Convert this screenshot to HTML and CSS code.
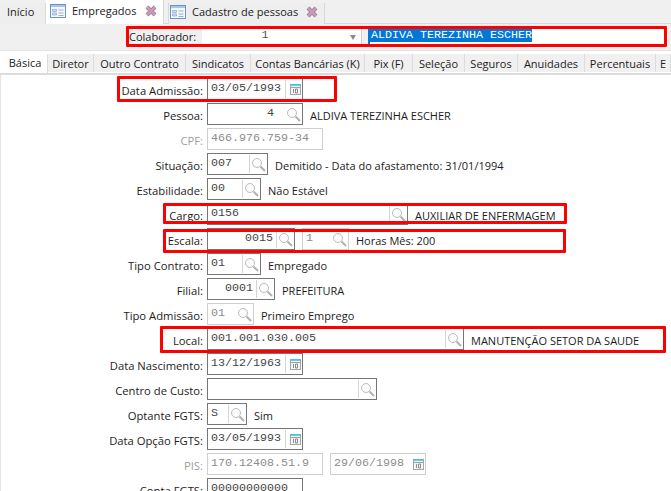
FILE: index.html
```html
<!DOCTYPE html>
<html lang="pt-BR">
<head>
<meta charset="utf-8">
<title>Empregados</title>
<link rel="stylesheet" href="styles.css">
</head>
<body>
<svg class="defs" aria-hidden="true">
  <symbol id="lupa" viewBox="0 0 15 15">
    <circle cx="6" cy="6" r="4.5" fill="#fbfbfb" stroke="#bdbdbd" stroke-width="1"/>
    <path d="M9.5 9.5l4.5 4.5" stroke="#b2b2b2" stroke-width="2" fill="none"/>
  </symbol>
  <symbol id="cal" viewBox="0 0 11 11">
    <rect x="0.5" y="0.5" width="10" height="10" fill="#f6f6f6" stroke="#a6a6a6"/>
    <path d="M0 1h11" stroke="#3cc8dc" stroke-width="1.6"/>
    <path d="M1 3.5h9" stroke="#a0a0a0"/>
    <path d="M3.5 5v4M5.5 5h2v4h-2z" stroke="#808080" fill="none" stroke-width="0.9"/>
  </symbol>
  <symbol id="grade" viewBox="0 0 16 16">
    <rect x="0.5" y="1.5" width="15" height="13" fill="#f4f7fc" stroke="#6f92c4"/>
    <path d="M1 3h14" stroke="#a9c3ea" stroke-width="2"/>
    <path d="M2.5 6.5h4v2h-4zM2.5 10h4v2h-4z" fill="#cfe0f5" stroke="#8aa6cc" stroke-width="0.7"/>
    <path d="M8.5 7h5M8.5 10h5M8.5 12.5h5" stroke="#9ab0d0"/>
  </symbol>
  <symbol id="fechar" viewBox="0 0 12 12">
    <path d="M2 2l8 8M10 2l-8 8" stroke="#8f8f8f" stroke-width="4" fill="none"/>
    <path d="M2 2l8 8M10 2l-8 8" stroke="#d893bd" stroke-width="2.4" fill="none"/>
  </symbol>
</svg>

<header class="tabs">
  <div class="tab tab-inicio">Início</div>
  <div class="tab tab-on">
    <svg class="ico-grade"><use href="#grade"/></svg><span>Empregados</span><svg class="ico-x"><use href="#fechar"/></svg>
  </div>
  <div class="tab tab-cad">
    <svg class="ico-grade"><use href="#grade"/></svg><span>Cadastro de pessoas</span><svg class="ico-x"><use href="#fechar"/></svg>
  </div>
</header>

<section class="colab">
  <span class="colab-label">Colaborador:</span>
  <div class="colab-num"><span class="colab-val">1</span><span class="spin"></span></div>
  <div class="colab-nome"><span class="sel">ALDIVA TEREZINHA ESCHER</span></div>
</section>

<nav class="subtabs">
  <div class="st st-on w-basica">Básica</div>
  <div class="st w-diretor">Diretor</div>
  <div class="st w-outro">Outro Contrato</div>
  <div class="st w-sind">Sindicatos</div>
  <div class="st w-contas">Contas Bancárias (K)</div>
  <div class="st w-pix">Pix (F)</div>
  <div class="st w-sel">Seleção</div>
  <div class="st w-seg">Seguros</div>
  <div class="st w-anu">Anuidades</div>
  <div class="st w-perc">Percentuais</div>
  <div class="st w-e">E</div>
</nav>

<main class="form">
  <div class="row"><label>Data Admissão:</label><div class="f w96"><span class="v">03/05/1993</span><i class="sep"></i><svg class="cal"><use href="#cal"/></svg></div></div>
  <div class="row"><label>Pessoa:</label><div class="f w96"><span class="v r r-pessoa">4</span><svg class="lupa"><use href="#lupa"/></svg></div><span class="d">ALDIVA TEREZINHA ESCHER</span></div>
  <div class="row off"><label>CPF:</label><div class="f w116"><span class="v">466.976.759-34</span></div></div>
  <div class="row"><label>Situação:</label><div class="f w61"><span class="v">007</span><i class="sep"></i><svg class="lupa"><use href="#lupa"/></svg></div><span class="d">Demitido - Data do afastamento: 31/01/1994</span></div>
  <div class="row"><label>Estabilidade:</label><div class="f w54"><span class="v">00</span><i class="sep"></i><svg class="lupa"><use href="#lupa"/></svg></div><span class="d">Não Estável</span></div>
  <div class="row"><label>Cargo:</label><div class="f w201"><span class="v">0156</span><i class="sep"></i><svg class="lupa"><use href="#lupa"/></svg></div><span class="d">AUXILIAR DE ENFERMAGEM</span></div>
  <div class="row"><label>Escala:</label><div class="f w88"><span class="v r">0015</span><i class="sep"></i><svg class="lupa"><use href="#lupa"/></svg></div><div class="f w47 dim"><span class="v">1</span><svg class="lupa"><use href="#lupa"/></svg></div><span class="d">Horas Mês: 200</span></div>
  <div class="row"><label>Tipo Contrato:</label><div class="f w54"><span class="v">01</span><i class="sep"></i><svg class="lupa"><use href="#lupa"/></svg></div><span class="d">Empregado</span></div>
  <div class="row"><label>Filial:</label><div class="f w68"><span class="v r">0001</span><i class="sep"></i><svg class="lupa"><use href="#lupa"/></svg></div><span class="d">PREFEITURA</span></div>
  <div class="row off-f"><label>Tipo Admissão:</label><div class="f w47"><span class="v">01</span><svg class="lupa"><use href="#lupa"/></svg></div><span class="d">Primeiro Emprego</span></div>
  <div class="row"><label>Local:</label><div class="f w258"><span class="v">001.001.030.005</span><i class="sep"></i><svg class="lupa"><use href="#lupa"/></svg></div><span class="d">MANUTENÇÃO SETOR DA SAUDE</span></div>
  <div class="row"><label>Data Nascimento:</label><div class="f w96"><span class="v">13/12/1963</span><i class="sep"></i><svg class="cal"><use href="#cal"/></svg></div></div>
  <div class="row"><label>Centro de Custo:</label><div class="f w170"><span class="v"></span><i class="sep"></i><svg class="lupa"><use href="#lupa"/></svg></div></div>
  <div class="row"><label>Optante FGTS:</label><div class="f w40"><span class="v">S</span><i class="sep"></i><svg class="lupa"><use href="#lupa"/></svg></div><span class="d">Sim</span></div>
  <div class="row"><label>Data Opção FGTS:</label><div class="f w96"><span class="v">03/05/1993</span><i class="sep"></i><svg class="cal"><use href="#cal"/></svg></div></div>
  <div class="row off"><label>PIS:</label><div class="f w116"><span class="v">170.12408.51.9</span></div><div class="f w96"><span class="v">29/06/1998</span><svg class="cal"><use href="#cal"/></svg></div></div>
  <div class="row"><label>Conta FGTS:</label><div class="f w96"><span class="v">00000000000</span></div></div>
</main>

<div class="mark m-colab"></div>
<div class="mark m-adm"></div>
<div class="mark m-cargo"></div>
<div class="mark m-escala"></div>
<div class="mark m-local"></div>
</body>
</html>
```
FILE: styles.css
```css
* { box-sizing: border-box; }
html, body { margin: 0; padding: 0; }
body {
  width: 671px;
  height: 491px;
  overflow: hidden;
  position: relative;
  background: #fff;
  color: #1c1c1c;
  font: 11px/14px "Open Sans", "Noto Sans", sans-serif;
}
.defs { position: absolute; width: 0; height: 0; }

.tabs {
  display: flex;
  align-items: flex-end;
  height: 24px;
  background: #f0f0f0;
  border-bottom: 1px solid #d9d9d9;
}
.tab {
  display: flex;
  align-items: center;
  height: 21px;
  background: #eeeeee;
  border-right: 1px solid #d9d9d9;
  margin-bottom: -1px;
}
.tab-inicio { width: 46px; padding-left: 7px; padding-bottom: 3px; }
.tab-on { width: 118px; height: 24px; background: #fff; padding-left: 4px; padding-bottom: 2px; }
.tab-cad { width: 157px; margin-left: 4px; padding-left: 1px; padding-bottom: 3px; border-left: 1px solid #d9d9d9; }
.ico-grade { width: 16px; height: 16px; margin-right: 6px; }
.ico-x { width: 12px; height: 12px; margin-left: 9px; }
.tab-cad .ico-x { margin-left: 8px; }

.colab {
  display: flex;
  align-items: stretch;
  height: 27px;
  padding: 2px 0 5px 0;
  background: #f0f0f0;
  border-bottom: 1px solid #e2e2e2;
}
.colab-label { width: 202px; padding-top: 4px; padding-left: 129px; }
.colab-num {
  display: flex;
  width: 160px;
  background: #fff;
  border-right: 1px solid #d0d0d0;
  font: 11.67px/18px "Liberation Mono", monospace;
  color: #555;
}
.colab-val { flex: 1; text-align: center; padding-right: 22px; }
.spin { width: 0; height: 0; margin: 9px 5px 0 0; border: 3.5px solid transparent; border-top: 5px solid #8a8a8a; }
.colab-nome {
  flex: 1;
  margin: 0 3px 0 6px;
  background: #fff;
  border-left: 2px solid #0078d7;
  font: 11.67px/18px "Liberation Mono", monospace;
}
.sel { background: #0078d7; color: #fff; display: inline-block; height: 14px; line-height: 14px; margin-top: 2px; padding: 0 0 0 1px; vertical-align: top; }

.subtabs {
  display: flex;
  align-items: flex-end;
  height: 24px;
  background: #fff;
  border-bottom: 2px solid #dcdcdc;
  overflow: hidden;
}
.st {
  height: 18px;
  margin-bottom: 1px;
  background: #f0f0f0;
  border-right: 1px solid #dcdcdc;
  text-align: center;
  line-height: 19px;
  white-space: nowrap;
}
.st-on { height: 21px; background: #fff; line-height: 17px; margin-bottom: -2px; padding-left: 3px; }
.w-basica { width: 48px; }
.w-diretor { width: 46px; }
.w-outro { width: 92px; }
.w-sind { width: 65px; }
.w-contas { width: 114px; }
.w-pix { width: 48px; }
.w-sel { width: 52px; }
.w-seg { width: 53px; }
.w-anu { width: 67px; }
.w-perc { width: 71px; }
.w-e { width: 15px; }

.form { padding-top: 3px; border-left: 1px solid #e4e4e4; }
.row { display: flex; align-items: center; gap: 7px; height: 22px; margin-bottom: 3px; }
.row label { width: 206px; margin-right: -7px; padding-right: 4px; padding-top: 4px; text-align: right; flex: none; font-size: 11.25px; }
.f {
  display: flex;
  align-items: center;
  height: 22px;
  flex: none;
  background: #fff;
  border: 1px solid #767676;
  padding: 0 1px 0 3px;
  color: #444;
}
.v { flex: 1; font: 11.67px/14px "Liberation Mono", monospace; white-space: nowrap; margin-top: -2px; }
.v.r { text-align: right; padding-right: 3px; }
.v.r-pessoa { padding-right: 12px; }
.sep { width: 1px; align-self: stretch; background: #d6d6d6; margin: 1px 1px 1px 0; }
.lupa { width: 15px; height: 15px; flex: none; margin-top: 1px; }
.cal { width: 11px; height: 11px; flex: none; margin: 1px 0 0 3px; }
.d { padding-top: 4px; white-space: nowrap; }
.off label { color: #a0a0a0; }
.off .f, .off-f .f, .dim { border-color: #cfcfcf; color: #8c8c8c; }
.off .v, .off-f .v, .dim .v { color: #8c8c8c; }

.w40 { width: 40px; }
.w47 { width: 47px; }
.w54 { width: 54px; }
.w61 { width: 61px; }
.w68 { width: 68px; }
.w88 { width: 88px; }
.w96 { width: 96px; }
.w116 { width: 116px; }
.w170 { width: 170px; }
.w201 { width: 201px; }
.w258 { width: 257px; }

.mark { position: absolute; border: 3px solid #f00; border-radius: 1px; }
.m-colab { left: 126px; top: 26px; width: 541px; height: 21px; }
.m-adm { left: 117px; top: 76px; width: 220px; height: 26px; }
.m-cargo { left: 163px; top: 203px; width: 404px; height: 21px; }
.m-escala { left: 163px; top: 229px; width: 403px; height: 24px; }
.m-local { left: 160px; top: 326px; width: 506px; height: 27px; }
```
